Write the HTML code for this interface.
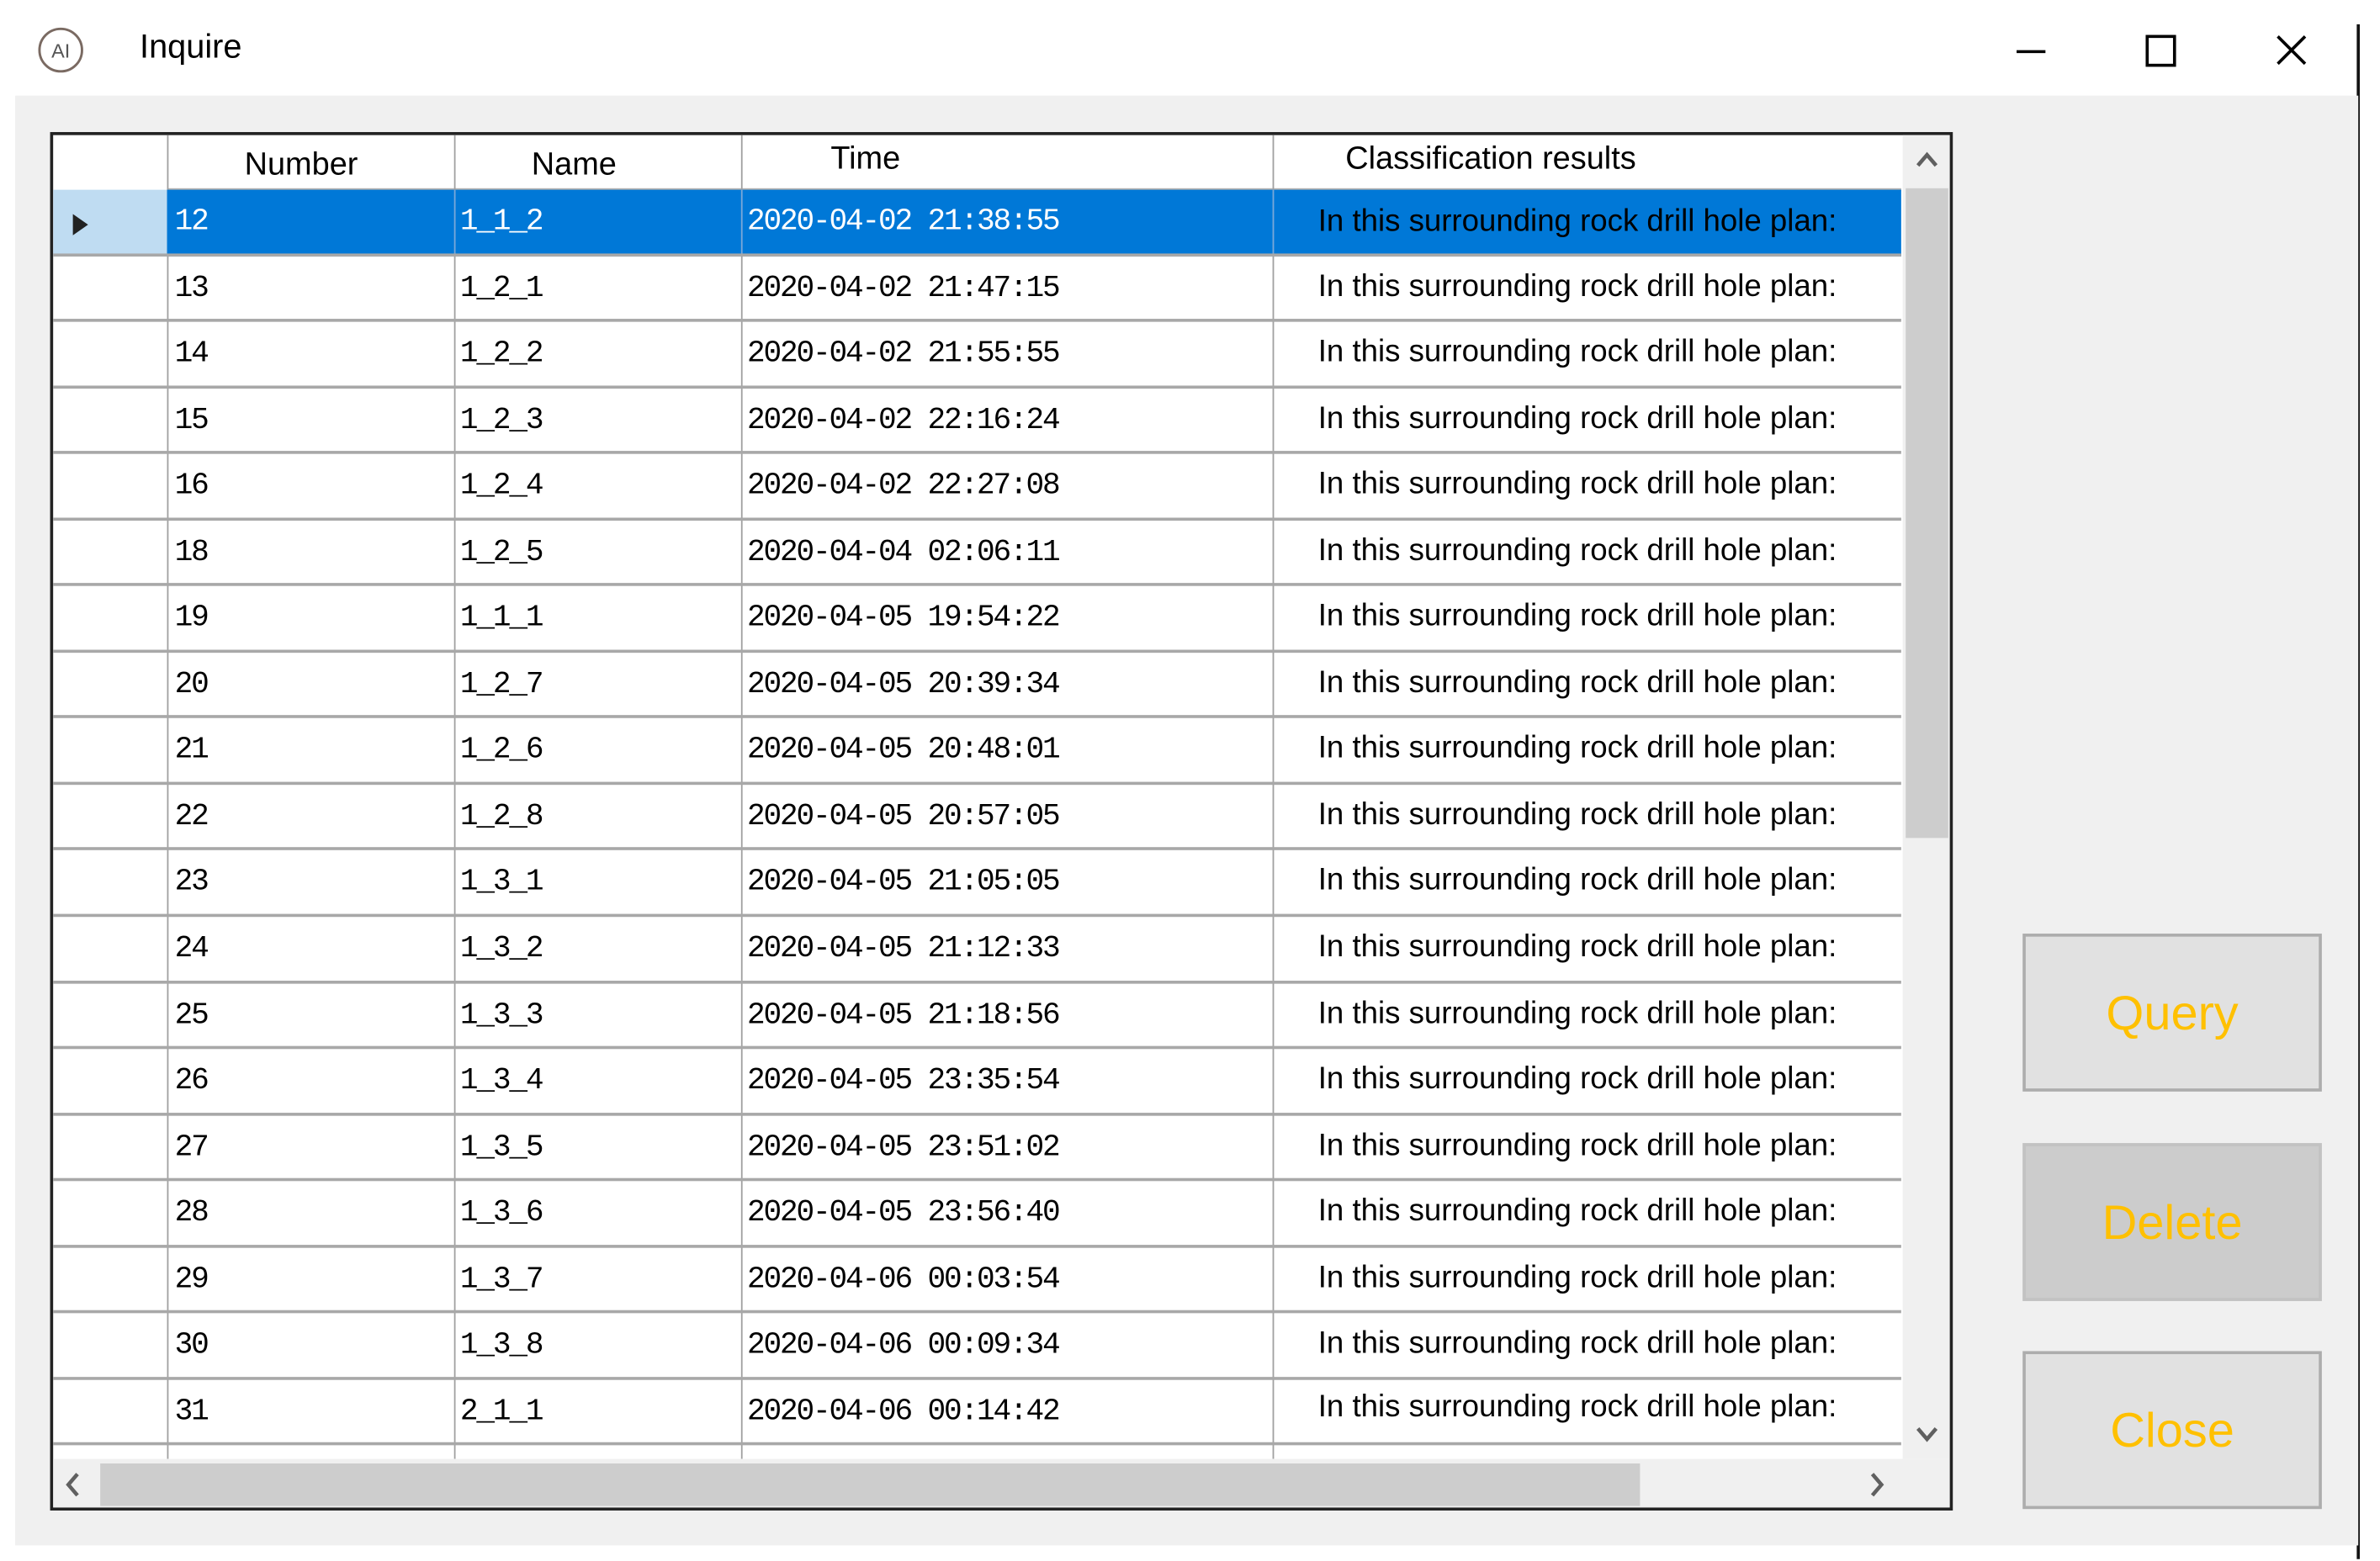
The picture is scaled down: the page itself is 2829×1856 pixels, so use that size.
<!DOCTYPE html>
<html><head><meta charset="utf-8"><style>
html,body{margin:0;padding:0;background:#fff;}
body{width:2829px;height:1856px;overflow:hidden;position:relative;}
#s{position:absolute;left:0;top:0;width:1567px;height:1028px;transform:scale(1.805);transform-origin:0 0;font-family:"Liberation Sans",sans-serif;}
.abs{position:absolute;}
#body{left:10px;top:63px;width:1543px;height:955px;background:#f0f0f0;}
#rline{left:1552px;top:16px;width:2px;height:1011px;background:#111;}
#tbl{left:33px;top:87px;width:1249px;height:904px;border:2px solid #222;background:#fff;overflow:hidden;}
.hdr{position:absolute;top:0;height:36px;font-size:21px;color:#000;}
.rows{position:absolute;left:0;top:36px;width:1217px;}
.row{position:relative;height:43.55px;border-bottom:0;}
.row .ln{position:absolute;left:0;right:0;bottom:0;height:2px;background:#a8a8a8;}
.c{position:absolute;top:0;height:43.55px;line-height:43.55px;font-family:"Liberation Mono",monospace;font-size:20px;letter-spacing:-1.2px;color:#000;}
.cl{position:absolute;top:0;height:43.55px;line-height:40px;left:833px;font-size:20.3px;color:#000;white-space:nowrap;}
.vl{position:absolute;top:0;width:1px;height:872px;background:#a0a0a0;}
.btn{position:absolute;left:1332px;width:193px;height:100px;border:2px solid #adadad;background:#e1e1e1;color:#ffc000;font-size:32px;text-align:center;line-height:100px;}
</style></head><body><div id="s">
<svg class="abs" style="left:24px;top:17px" width="32" height="32" viewBox="0 0 32 32"><circle cx="16" cy="16" r="14" fill="none" stroke="#7a6a62" stroke-width="1.6"/><text x="16" y="21" font-size="13" text-anchor="middle" fill="#555" font-family="Liberation Sans">AI</text></svg>
<div class="abs" style="left:92px;top:18px;font-size:22px;color:#000">Inquire</div>
<svg class="abs" style="left:1318px;top:16px" width="220" height="36" viewBox="0 0 220 36"><line x1="10" y1="18" x2="29" y2="18" stroke="#000" stroke-width="2"/><rect x="96" y="8" width="18" height="19" fill="none" stroke="#000" stroke-width="2"/><path d="M182 8 L200 26 M200 8 L182 26" stroke="#000" stroke-width="2"/></svg>
<div id="rline" class="abs"></div>
<div id="body" class="abs"></div>
<div id="tbl" class="abs">
  <div class="hdr" style="left:75px;width:1142px;border-bottom:2px solid #b0b0b0;height:35px"></div>
  <div class="hdr" style="left:126px;top:8px">Number</div>
  <div class="hdr" style="left:315px;top:8px">Name</div>
  <div class="hdr" style="left:512px;top:4px">Time</div>
  <div class="hdr" style="left:851px;top:4px">Classification results</div>
  <div class="vl" style="left:75px"></div><div class="vl" style="left:264px"></div><div class="vl" style="left:453px"></div><div class="vl" style="left:803px"></div>
  <div class="rows">
   <div class="row"><div class="abs" style="left:0;top:0;width:75px;height:43.55px;background:#bfdcf2"></div><div class="abs" style="left:75px;top:0;width:1142px;height:43.55px;background:#0078d7"></div><svg class="abs" style="left:12px;top:15px" width="12" height="16"><path d="M1 1 L11 8 L1 15Z" fill="#222"/></svg><div class="vl" style="left:264px;height:43.55px;background:#7aa8d8"></div><div class="vl" style="left:453px;height:43.55px;background:#7aa8d8"></div><div class="vl" style="left:803px;height:43.55px;background:#7aa8d8"></div><div class="c" style="left:80px;color:#fff">12</div><div class="c" style="left:268px;color:#fff">1_1_2</div><div class="c" style="left:457px;color:#fff">2020-04-02 21:38:55</div><div class="cl" style="line-height:43px;color:#000">In this surrounding rock drill hole plan:</div><div class="ln"></div></div>
   <div class="row"><div class="c" style="left:80px">13</div><div class="c" style="left:268px">1_2_1</div><div class="c" style="left:457px">2020-04-02 21:47:15</div><div class="cl">In this surrounding rock drill hole plan:</div><div class="ln"></div></div>
   <div class="row"><div class="c" style="left:80px">14</div><div class="c" style="left:268px">1_2_2</div><div class="c" style="left:457px">2020-04-02 21:55:55</div><div class="cl">In this surrounding rock drill hole plan:</div><div class="ln"></div></div>
   <div class="row"><div class="c" style="left:80px">15</div><div class="c" style="left:268px">1_2_3</div><div class="c" style="left:457px">2020-04-02 22:16:24</div><div class="cl">In this surrounding rock drill hole plan:</div><div class="ln"></div></div>
   <div class="row"><div class="c" style="left:80px">16</div><div class="c" style="left:268px">1_2_4</div><div class="c" style="left:457px">2020-04-02 22:27:08</div><div class="cl">In this surrounding rock drill hole plan:</div><div class="ln"></div></div>
   <div class="row"><div class="c" style="left:80px">18</div><div class="c" style="left:268px">1_2_5</div><div class="c" style="left:457px">2020-04-04 02:06:11</div><div class="cl">In this surrounding rock drill hole plan:</div><div class="ln"></div></div>
   <div class="row"><div class="c" style="left:80px">19</div><div class="c" style="left:268px">1_1_1</div><div class="c" style="left:457px">2020-04-05 19:54:22</div><div class="cl">In this surrounding rock drill hole plan:</div><div class="ln"></div></div>
   <div class="row"><div class="c" style="left:80px">20</div><div class="c" style="left:268px">1_2_7</div><div class="c" style="left:457px">2020-04-05 20:39:34</div><div class="cl">In this surrounding rock drill hole plan:</div><div class="ln"></div></div>
   <div class="row"><div class="c" style="left:80px">21</div><div class="c" style="left:268px">1_2_6</div><div class="c" style="left:457px">2020-04-05 20:48:01</div><div class="cl">In this surrounding rock drill hole plan:</div><div class="ln"></div></div>
   <div class="row"><div class="c" style="left:80px">22</div><div class="c" style="left:268px">1_2_8</div><div class="c" style="left:457px">2020-04-05 20:57:05</div><div class="cl">In this surrounding rock drill hole plan:</div><div class="ln"></div></div>
   <div class="row"><div class="c" style="left:80px">23</div><div class="c" style="left:268px">1_3_1</div><div class="c" style="left:457px">2020-04-05 21:05:05</div><div class="cl">In this surrounding rock drill hole plan:</div><div class="ln"></div></div>
   <div class="row"><div class="c" style="left:80px">24</div><div class="c" style="left:268px">1_3_2</div><div class="c" style="left:457px">2020-04-05 21:12:33</div><div class="cl">In this surrounding rock drill hole plan:</div><div class="ln"></div></div>
   <div class="row"><div class="c" style="left:80px">25</div><div class="c" style="left:268px">1_3_3</div><div class="c" style="left:457px">2020-04-05 21:18:56</div><div class="cl">In this surrounding rock drill hole plan:</div><div class="ln"></div></div>
   <div class="row"><div class="c" style="left:80px">26</div><div class="c" style="left:268px">1_3_4</div><div class="c" style="left:457px">2020-04-05 23:35:54</div><div class="cl">In this surrounding rock drill hole plan:</div><div class="ln"></div></div>
   <div class="row"><div class="c" style="left:80px">27</div><div class="c" style="left:268px">1_3_5</div><div class="c" style="left:457px">2020-04-05 23:51:02</div><div class="cl">In this surrounding rock drill hole plan:</div><div class="ln"></div></div>
   <div class="row"><div class="c" style="left:80px">28</div><div class="c" style="left:268px">1_3_6</div><div class="c" style="left:457px">2020-04-05 23:56:40</div><div class="cl">In this surrounding rock drill hole plan:</div><div class="ln"></div></div>
   <div class="row"><div class="c" style="left:80px">29</div><div class="c" style="left:268px">1_3_7</div><div class="c" style="left:457px">2020-04-06 00:03:54</div><div class="cl">In this surrounding rock drill hole plan:</div><div class="ln"></div></div>
   <div class="row"><div class="c" style="left:80px">30</div><div class="c" style="left:268px">1_3_8</div><div class="c" style="left:457px">2020-04-06 00:09:34</div><div class="cl">In this surrounding rock drill hole plan:</div><div class="ln"></div></div>
   <div class="row"><div class="c" style="left:80px">31</div><div class="c" style="left:268px">2_1_1</div><div class="c" style="left:457px">2020-04-06 00:14:42</div><div class="cl" style="line-height:36px">In this surrounding rock drill hole plan:</div><div class="ln"></div></div>
  </div>
  <div class="abs" style="left:1218px;top:0;width:31px;height:872px;background:#f0f0f0"></div>
  <div class="abs" style="left:1220px;top:35px;width:28px;height:428px;background:#cdcdcd"></div>
  <svg class="abs" style="left:1226px;top:10px" width="16" height="12"><path d="M2 10 L8 3 L14 10" fill="none" stroke="#606060" stroke-width="2.5"/></svg>
  <svg class="abs" style="left:1226px;top:850px" width="16" height="12"><path d="M2 2 L8 9 L14 2" fill="none" stroke="#606060" stroke-width="2.5"/></svg>
  <div class="abs" style="left:0;top:872px;width:1249px;height:32px;background:#f0f0f0"></div>
  <div class="abs" style="left:31px;top:875px;width:1014px;height:28px;background:#cdcdcd"></div>
  <svg class="abs" style="left:7px;top:880px" width="12" height="18"><path d="M9 2 L3 9 L9 16" fill="none" stroke="#606060" stroke-width="2.5"/></svg>
  <svg class="abs" style="left:1195px;top:880px" width="12" height="18"><path d="M3 2 L9 9 L3 16" fill="none" stroke="#606060" stroke-width="2.5"/></svg>
</div>
<div class="btn" style="top:615px">Query</div>
<div class="btn" style="top:753px;background:#cccccc;border-color:#c2c2c2">Delete</div>
<div class="btn" style="top:890px">Close</div>
</div></body></html>
